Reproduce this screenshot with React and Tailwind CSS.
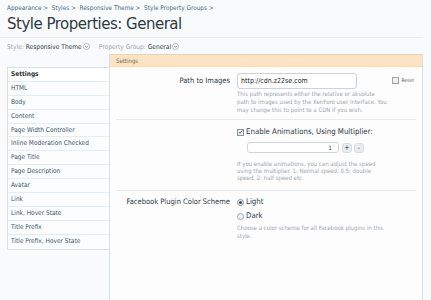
import React from "react";

const NAV = [
  "Settings",
  "HTML",
  "Body",
  "Content",
  "Page Width Controller",
  "Inline Moderation Checked",
  "Page Title",
  "Page Description",
  "Avatar",
  "Link",
  "Link, Hover State",
  "Title Prefix",
  "Title Prefix, Hover State",
];

const FONT = { fontFamily: '"DejaVu Sans Condensed", "DejaVu Sans", Verdana, sans-serif' };

function Chevron() {
  return (
    <svg width="7" height="7" viewBox="0 0 10 10" className="inline-block ml-[1px] align-[-1px]">
      <circle cx="5" cy="5" r="4.3" fill="#fff" stroke="#8a9aa8" strokeWidth="0.9" />
      <path d="M3 4.2 L5 6.2 L7 4.2" fill="none" stroke="#4a5a68" strokeWidth="1" />
    </svg>
  );
}

export default function App() {
  return (
    <div className="w-[431px] h-[300px] overflow-hidden bg-[#f9fafc] text-[#333]" style={FONT}>
      {/* header */}
      <div className="pl-[7px] pr-[8px]">
        <div className="pt-[5px] text-[6.4px] leading-[7px] text-[#4d6b86]">
          Appearance &gt;&nbsp; Styles &gt;&nbsp; Responsive Theme &gt;&nbsp; Style Property Groups &gt;
        </div>
        <h1 className="mt-[2px] text-[15px] leading-[20px] text-[#2d3a44] tracking-[-0.5px]" style={{ fontFamily: '"DejaVu Sans", sans-serif' }}>
          Style Properties: General
        </h1>
      </div>
      <div className="mt-[3px] mr-[8px] border-t border-[#e6edf2]" />
      <div className="pl-[7px] mt-[5px] text-[6.6px] leading-[8px] text-[#9aa4ad]">
        Style: <span className="text-[#2d3a44]">Responsive Theme</span>
        <Chevron />
        <span className="ml-[9px]">Property Group: </span>
        <span className="text-[#2d3a44]">General</span>
        <Chevron />
      </div>

      {/* body */}
      <div className="flex mt-[3px] pl-[7px] pr-[8px]">
        <ul className="relative z-10 mt-[13px] w-[103px] shrink-0 self-start bg-[#fcfdfe] border border-[#d3e1ea] text-[6.5px]">
          {NAV.map((n, i) => (
            <li
              key={n}
              className={`h-[13.9px] leading-[13px] pl-[3px] border-b border-[#e3edf3] last:border-b-0 ${
                i === 0 ? "text-[#2a2f33] font-bold bg-white" : "text-[#3b546a]"
              }`}
            >
              {n}
            </li>
          ))}
        </ul>

        <div className="-ml-px flex-1 h-[260px] border-l border-r border-[#d3e1ea] bg-[#fdfdfe]">
          <div className="h-[13px] bg-[#fbe3c3] border-t border-[#f0d3a8] border-b border-b-[#f3dcb8] pl-[6px] text-[6px] leading-[12px] text-[#7a6a50]">
            Settings
          </div>

          {/* row 1 */}
          <div className="flex pt-[6px] mx-[6px] pb-[5px] border-b border-[#e4ecf2]">
            <div className="w-[121px] shrink-0 text-right text-[7.5px] leading-[16px] pr-[7px] text-[#2d3a44]">Path to Images</div>
            <div className="flex-1 pr-[2px]">
              <div className="flex items-start">
                <div className="w-[120px] h-[16px] border border-[#c8d3da] rounded-[3px] bg-white text-[7px] leading-[14px] pl-[3px] text-[#222]">
                  http://cdn.z22se.com
                </div>
                <div className="ml-auto mt-[4px] flex items-center gap-[2px] text-[5px] text-[#555]">
                  <span className="w-[7px] h-[7px] border border-[#9aa3aa] bg-[#f0f0f0]" />
                  Reset
                </div>
              </div>
              <p className="mt-[1px] text-[6px] leading-[8px] text-[#a0a6ab] w-[150px]">
                This path represents either the relative or absolute path to images used by the XenForo user interface. You may change this to point to a CDN if you wish.
              </p>
            </div>
          </div>

          {/* row 2 */}
          <div className="flex pt-[7px] mx-[6px] pb-[9px] border-b border-[#e4ecf2]">
            <div className="w-[121px] shrink-0" />
            <div className="flex-1">
              <div className="flex items-center gap-[2px] text-[7.8px] leading-[10px] text-[#2d3a44]">
                <span className="w-[7px] h-[7px] border border-[#8a939a] bg-[#eef0f2] flex items-center justify-center">
                  <svg width="6" height="6" viewBox="0 0 6 6">
                    <path d="M1 3 L2.4 4.6 L5 1.2" fill="none" stroke="#3a4a5a" strokeWidth="1" />
                  </svg>
                </span>
                Enable Animations, Using Multiplier:
              </div>
              <div className="flex items-center mt-[5px] ml-[10px]">
                <div className="w-[92px] h-[11px] border border-[#cdd6dc] rounded-[3px] bg-white text-[6px] leading-[9px] text-right pr-[6px]">1</div>
                <span className="ml-[3px] w-[10px] h-[10px] rounded-[3px] bg-[#e9edf0] border border-[#d5dce1] text-[7px] leading-[8px] text-center text-[#333]">+</span>
                <span className="ml-[2px] w-[10px] h-[10px] rounded-[3px] bg-[#e9edf0] border border-[#d5dce1] text-[7px] leading-[8px] text-center text-[#333]">-</span>
              </div>
              <p className="mt-[7px] text-[6px] leading-[7px] text-[#a0a6ab] w-[150px]">
                If you enable animations, you can adjust the speed using the multiplier. 1: Normal speed, 0.5: double speed, 2: half speed etc.
              </p>
            </div>
          </div>

          {/* row 3 */}
          <div className="flex pt-[6px] mx-[6px]">
            <div className="w-[121px] shrink-0 text-right text-[7.5px] leading-[10px] pr-[7px] text-[#2d3a44]">Facebook Plugin Color Scheme</div>
            <div className="flex-1">
              <div className="flex items-center gap-[2px] text-[7.8px] leading-[10px] text-[#2d3a44]">
                <span className="w-[7px] h-[7px] rounded-full border border-[#8a939a] bg-[#eef0f2] flex items-center justify-center">
                  <span className="w-[3px] h-[3px] rounded-full bg-[#2f4a66]" />
                </span>
                Light
              </div>
              <div className="flex items-center gap-[2px] mt-[4px] text-[7.8px] leading-[10px] text-[#2d3a44]">
                <span className="w-[7px] h-[7px] rounded-full border border-[#a0a8ae] bg-[#eef0f2]" />
                Dark
              </div>
              <p className="mt-[3px] text-[6px] leading-[8px] text-[#a0a6ab] w-[160px]">
                Choose a color scheme for all Facebook plugins in this style.
              </p>
            </div>
          </div>
        </div>
      </div>
    </div>
  );
}
